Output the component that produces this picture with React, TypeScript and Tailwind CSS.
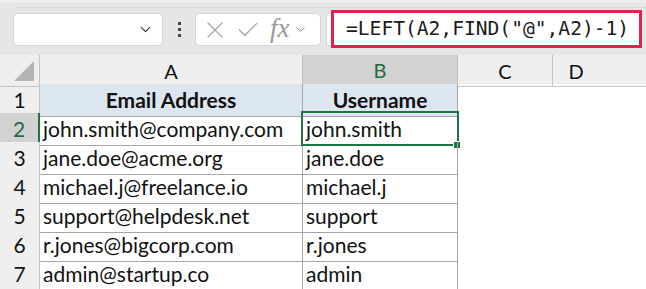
import { ChevronDown, X, Check } from 'lucide-react';

const rows = [
  ['john.smith@company.com', 'john.smith'],
  ['jane.doe@acme.org', 'jane.doe'],
  ['michael.j@freelance.io', 'michael.j'],
  ['support@helpdesk.net', 'support'],
  ['r.jones@bigcorp.com', 'r.jones'],
  ['admin@startup.co', 'admin'],
];

const cellFont = { fontFamily: 'Lato, "Open Sans", sans-serif' };

export default function App() {
  return (
    <div className="w-[646px] h-[289px] overflow-hidden bg-white" style={cellFont}>
      {/* Formula bar */}
      <div className="h-[55px] bg-[#e6e6e6] border-t-[3px] border-[#ededed] flex items-center relative">
        <div className="absolute top-[4px] left-[18px] right-0 border-t border-dotted border-[#d0d0d0]" />
        <div className="ml-[13px] w-[150px] h-[33px] mt-[1px] bg-white rounded-[5px] border border-[#d6d6d6] flex items-center justify-end pr-[8px]">
          <ChevronDown className="w-[17px] h-[17px] text-[#333]" strokeWidth={1.6} />
        </div>
        <div className="w-[32px] flex flex-col items-center gap-[3px]">
          <span className="w-[3px] h-[3px] bg-[#444]" />
          <span className="w-[3px] h-[3px] bg-[#444]" />
          <span className="w-[3px] h-[3px] bg-[#444]" />
        </div>
        <div className="w-[126px] h-[33px] mt-[1px] bg-white rounded-[5px] border border-[#d6d6d6] flex items-center pl-[5px] gap-[6px] text-[#a8a8a8]">
          <X className="w-[28px] h-[28px]" strokeWidth={1.1} />
          <Check className="w-[26px] h-[26px]" strokeWidth={1.2} />
          <span
            className="italic text-[27px] leading-none ml-[3px] -mt-[3px] text-[#9a9a9a]"
            style={{ fontFamily: '"Liberation Serif", serif' }}
          >
            fx
          </span>
          <ChevronDown className="w-[15px] h-[15px] -ml-[3px] text-[#888]" strokeWidth={1.6} />
        </div>
        <div className="ml-[5px] w-[5px] h-[33px] bg-white rounded-l-[3px] border border-[#d6d6d6] border-r-0" />
        <div className="w-[311px] h-[38px] bg-white border-[3px] border-[#e0234e] flex items-center pl-[12px]">
          <span
            className="text-[19.6px] text-[#1a1a1a] leading-none"
            style={{ fontFamily: '"DejaVu Sans Mono", monospace' }}
          >
            =LEFT(A2,FIND("@",A2)-1)
          </span>
        </div>
      </div>

      {/* Column headers */}
      <div className="grid grid-cols-[40px_263px_155px_95px_1fr] h-[29px] bg-[#efefef] text-[20px] text-[#111]">
        <div className="relative border-r border-b border-[#c4c4c4]">
          <div
            className="absolute right-[5px] bottom-[5px] w-[20px] h-[20px] bg-[#b4b4b4]"
            style={{ clipPath: 'polygon(100% 0, 100% 100%, 0 100%)' }}
          />
        </div>
        <div className="flex items-center justify-center border-r border-b border-[#c4c4c4]">A</div>
        <div className="flex items-center justify-center bg-[#d2d2d2] text-[#1e6b3e] border-r border-[#c4c4c4] border-b-2 border-b-[#217346]">
          B
        </div>
        <div className="flex items-center justify-center border-r border-b border-[#c4c4c4]">C</div>
        <div className="flex items-center justify-center pr-[47px] border-b border-[#c4c4c4]">D</div>
      </div>

      {/* Row 1 */}
      <div className="grid grid-cols-[40px_263px_155px_95px_1fr] h-[29px] text-[21px] text-[#111]">
        <div className="flex items-center justify-center bg-[#efefef] border-r border-b border-[#c4c4c4]">1</div>
        <div className="flex items-center justify-center font-bold bg-[#dce6f0] border-r border-b border-[#a6a6a6]">
          Email Address
        </div>
        <div className="flex items-center justify-center font-bold bg-[#dce6f0] border-r border-b border-[#a6a6a6]">
          Username
        </div>
        <div />
        <div />
      </div>

      {rows.map(([email, user], i) => {
        const selected = i === 0;
        return (
          <div key={email} className="grid grid-cols-[40px_263px_155px_95px_1fr] h-[29px] text-[21px] text-[#111]">
            <div
              className={
                selected
                  ? 'flex items-center justify-center bg-[#d2d2d2] text-[#1e6b3e] border-r-2 border-r-[#217346] border-b border-b-[#c4c4c4]'
                  : 'flex items-center justify-center bg-[#efefef] border-r border-b border-[#c4c4c4]'
              }
            >
              {i + 2}
            </div>
            <div className="flex items-center pl-[3px] border-r border-b border-[#a6a6a6]">{email}</div>
            <div className="relative flex items-center pl-[3px] border-r border-b border-[#a6a6a6]">
              {user}
              {selected && (
                <>
                  <div className="absolute -left-[2px] -top-[2px] -right-[2px] -bottom-[1px] border-2 border-[#217346]" />
                  <div className="absolute -right-[4px] -bottom-[4px] w-[6px] h-[6px] bg-[#217346] border border-white box-content" />
                </>
              )}
            </div>
            <div />
            <div />
          </div>
        );
      })}
    </div>
  );
}
